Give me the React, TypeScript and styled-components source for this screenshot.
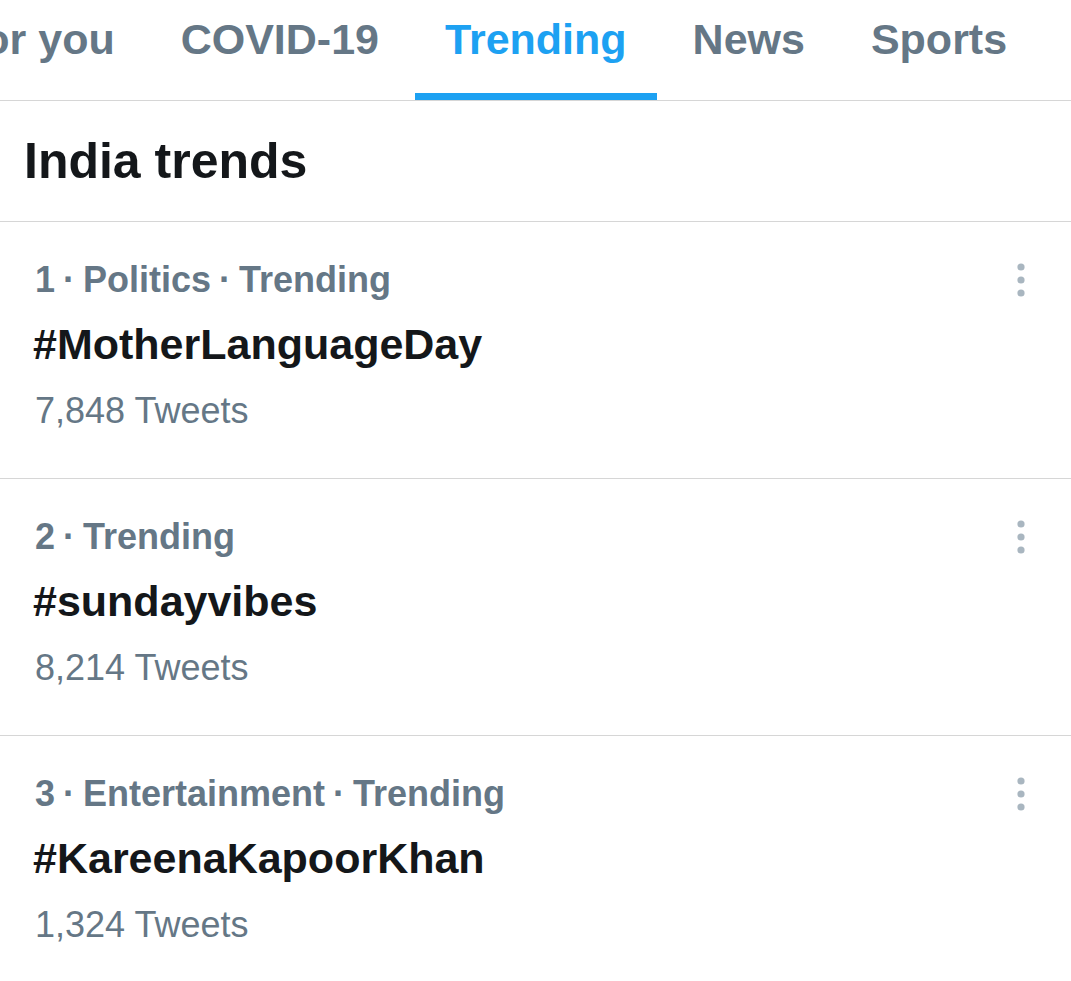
import styled, { createGlobalStyle } from 'styled-components';

const GlobalStyle = createGlobalStyle`
  html, body {
    margin: 0;
    padding: 0;
    background: #ffffff;
  }
  body {
    font-family: 'Liberation Sans', Arial, Helvetica, sans-serif;
    overflow: hidden;
  }
`;

interface TabProps {
  $active?: boolean;
}

const tabs = ['For you', 'COVID-19', 'Trending', 'News', 'Sports'];

const trends = [
  { meta: '1 · Politics · Trending', tag: '#MotherLanguageDay', count: '7,848 Tweets' },
  { meta: '2 · Trending', tag: '#sundayvibes', count: '8,214 Tweets' },
  { meta: '3 · Entertainment · Trending', tag: '#KareenaKapoorKhan', count: '1,324 Tweets' },
];

function MoreIcon() {
  return (
    <svg width="8" height="34" viewBox="0 0 8 34">
      <circle cx="4" cy="4" r="3.6" fill="#a9b6c0" />
      <circle cx="4" cy="17" r="3.6" fill="#a9b6c0" />
      <circle cx="4" cy="30" r="3.6" fill="#a9b6c0" />
    </svg>
  );
}

function App() {
  return (
    <Page>
      <GlobalStyle />
      <TabBar>
        <TabStrip>
          {tabs.map((t) => (
            <Tab key={t} $active={t === 'Trending'}>
              {t}
            </Tab>
          ))}
        </TabStrip>
      </TabBar>

      <Title>India trends</Title>

      {trends.map((trend) => (
        <TrendRow key={trend.tag}>
          <TrendBody>
            <Meta>{trend.meta}</Meta>
            <Tag>{trend.tag}</Tag>
            <Count>{trend.count}</Count>
          </TrendBody>
          <More>
            <MoreIcon />
          </More>
        </TrendRow>
      ))}
    </Page>
  );
}
export default App;

const Page = styled.div`
  width: 1071px;
  height: 981px;
  overflow: hidden;
  background: #ffffff;
`;

const TabBar = styled.div`
  height: 100px;
  overflow: hidden;
  border-bottom: 1px solid #d6d6d6;
`;

// strip is scrolled so that "For you" is partly out of view
const TabStrip = styled.div`
  display: flex;
  margin-left: -76px;
  height: 100px;
`;

const Tab = styled.div<TabProps>`
  flex: none;
  box-sizing: border-box;
  height: 100px;
  margin: 0 3px;
  padding: 18px 30px 0;
  font-size: 43px;
  font-weight: 700;
  line-height: 1;
  white-space: nowrap;
  color: ${(props) => (props.$active ? '#1da1f2' : '#657786')};
  border-bottom: 7px solid ${(props) => (props.$active ? '#1da1f2' : 'transparent')};
`;

const Title = styled.h1`
  margin: 0;
  box-sizing: border-box;
  height: 121px;
  padding: 35px 0 0 24px;
  font-size: 50px;
  font-weight: 700;
  line-height: 1;
  color: #14171a;
  border-bottom: 1px solid #d6d6d6;
`;

const TrendRow = styled.div`
  display: flex;
  box-sizing: border-box;
  height: 257px;
  padding: 36px 46px 0 33px;
  border-bottom: 1px solid #d6d6d6;
`;

const TrendBody = styled.div`
  flex: 1;
  display: flex;
  flex-direction: column;
`;

const Meta = styled.div`
  font-size: 36px;
  font-weight: 700;
  line-height: 44px;
  color: #657786;
  padding-left: 2px;
  word-spacing: -2px;
`;

const Tag = styled.div`
  margin-top: 14px;
  font-size: 43px;
  font-weight: 700;
  line-height: 56px;
  color: #14171a;
`;

const Count = styled.div`
  margin-top: 17px;
  padding-left: 2px;
  font-size: 36px;
  font-weight: 400;
  line-height: 44px;
  color: #657786;
`;

const More = styled.div`
  flex: none;
  padding-top: 5px;
`;
